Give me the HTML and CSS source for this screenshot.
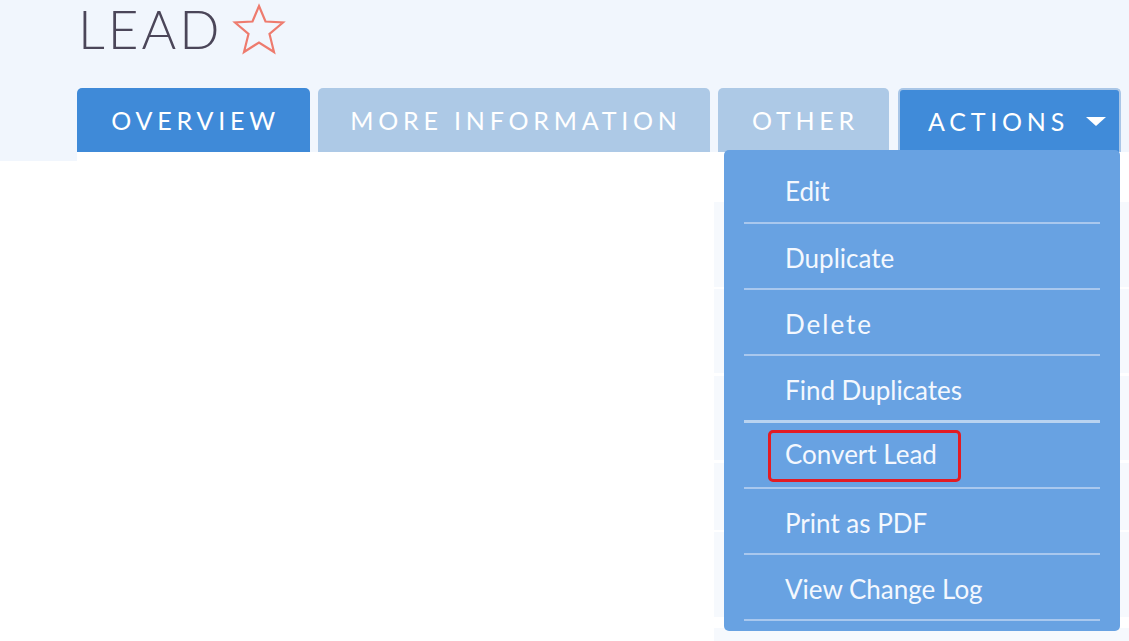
FILE: index.html
```html
<!DOCTYPE html>
<html>
<head>
<meta charset="utf-8">
<link rel="stylesheet" href="styles.css">
</head>
<body>
<div class="header">
  <div class="title-row">
    <h1 class="title">LEAD</h1>
    <svg class="star" width="54" height="52" viewBox="0 0 54 52"><polygon points="27,3 33.5,18.5 51,19.5 37.5,31 42,49 27,39.5 12,49 16.5,31 3,19.5 20.5,18.5" fill="none" stroke="#ee7b6e" stroke-width="2.2" stroke-linejoin="miter"/></svg>
  </div>
  <div class="tabs">
    <div class="tab active">OVERVIEW</div>
    <div class="tab light">MORE INFORMATION</div>
    <div class="tab light other">OTHER</div>
    <div class="tab actions">ACTIONS<span class="caret"></span>
      <ul class="menu">
        <li>Edit</li>
        <li>Duplicate</li>
        <li class="spaced">Delete</li>
        <li class="thick">Find Duplicates</li>
        <li><span class="highlight">Convert Lead</span></li>
        <li>Print as PDF</li>
        <li>View Change Log</li>
      </ul>
    </div>
  </div>
</div>
<div class="content">
  <div class="gutter"></div>
  <div class="main">
    <div class="panel">
      <div class="row r1"></div>
      <div class="row r2"></div>
      <div class="row r3"></div>
      <div class="row r4"></div>
      <div class="row r5"></div>
      <div class="row r6"></div>
    </div>
  </div>
</div>
</body>
</html>
```
FILE: styles.css
```css
* { box-sizing: border-box; }
html, body { margin: 0; padding: 0; }
body {
  font-family: Lato, "Noto Sans", sans-serif;
  background: #ffffff;
  width: 1129px;
  height: 641px;
  overflow: hidden;
}
.header {
  background: #f1f6fd;
  height: 152px;
  padding-left: 77px;
}
.title-row {
  display: flex;
  align-items: flex-start;
  height: 88px;
}
.title {
  margin: -3px 0 0 0;
  font-weight: 300;
  font-size: 53px;
  line-height: 64px;
  letter-spacing: 3px;
  color: #4b4659;
  padding-left: 1px;
}
.star {
  margin-left: 9px;
  margin-top: 3px;
}
.tabs {
  display: flex;
  align-items: flex-end;
  height: 64px;
}
.tab {
  height: 64px;
  display: flex;
  align-items: center;
  justify-content: center;
  color: #ffffff;
  font-size: 25px;
  letter-spacing: 4.8px;
  border-radius: 5px 5px 0 0;
  margin-right: 8px;
  position: relative;
  padding-left: 4px;
}
.tab.active {
  background: #3f8ad8;
  width: 233px;
}
.tab.light {
  background: #adc9e6;
  width: 392px;
}
.tab.other {
  width: 171px;
}
.tab.actions {
  background: #408bd9;
  width: 223px;
  border: 2px solid #a9c6e7;
  border-bottom: none;
  margin-right: 0;
  margin-left: 1px;
  padding-left: 15px;
}
.caret {
  display: inline-block;
  width: 0;
  height: 0;
  border-left: 10px solid transparent;
  border-right: 10px solid transparent;
  border-top: 9px solid #ffffff;
  margin-left: 17px;
  margin-top: 1px;
}
.menu {
  position: absolute;
  top: 60px;
  right: -1px;
  width: 396px;
  margin: 0;
  padding: 0 20px 10px 20px;
  list-style: none;
  background: #68a2e2;
  border-radius: 5px;
  letter-spacing: 0;
  z-index: 5;
}
.menu li {
  height: 66px;
  border-bottom: 2px solid #a9c8ee;
  display: flex;
  align-items: center;
  padding-left: 41px;
  font-size: 26px;
  color: #f4f8fe;
  padding-top: 4px;
}
.menu li:first-child { height: 74px; padding-top: 10px; }
.menu li.spaced { letter-spacing: 2px; }
.menu li.thick { border-bottom: 3px solid #b9d3f0; height: 67px; }
.highlight {
  border: 3px solid #e31b23;
  border-radius: 5px;
  padding: 5px 21px 9px 14px;
  margin-left: -17px;
  margin-top: -2px;
}
.content {
  display: flex;
}
.gutter {
  width: 77px;
  height: 9px;
  background: #f1f6fd;
}
.main {
  flex: 1;
}
.panel {
  margin-left: 637px;
  padding-top: 50px;
  display: flex;
  flex-direction: column;
  gap: 2px;
}
.row {
  background: #f6f9fd;
}
.r1 { height: 85px; }
.r2 { height: 84px; }
.r3 { height: 84px; margin-top: 1px; }
.r4 { height: 67px; margin-top: 1px; }
.r5 { height: 85px; }
.r6 { height: 30px; margin-top: 9px; }
```
